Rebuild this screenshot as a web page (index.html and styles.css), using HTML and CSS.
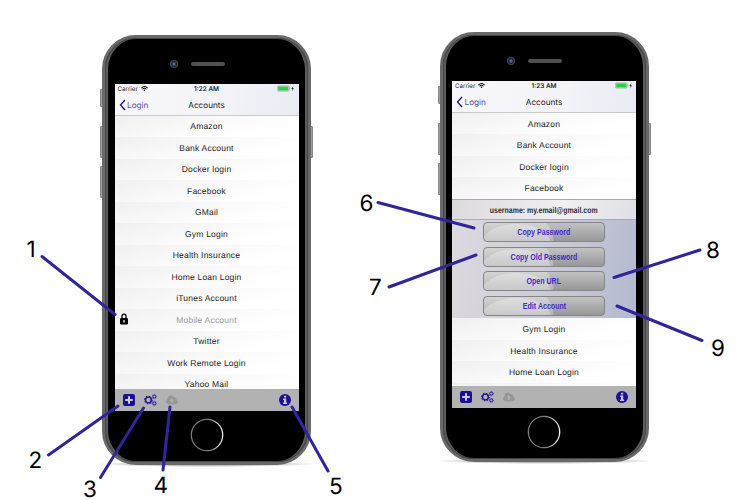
FILE: index.html
```html
<!DOCTYPE html>
<html lang="en">
<head>
<meta charset="utf-8">
<title>Accounts guide</title>
<link rel="stylesheet" href="styles.css">
</head>
<body>
<svg class="defs" width="0" height="0" aria-hidden="true">
  <defs>
    <linearGradient id="ring" x1="0" y1="0" x2="1" y2="0"><stop offset="0" stop-color="#777"/><stop offset=".5" stop-color="#777"/><stop offset="1" stop-color="#eee"/></linearGradient>
    <symbol id="wifi" viewBox="0 0 14 10"><path d="M0 3.3a10.3 10.3 0 0 1 14 0L12.6 4.8a8.2 8.2 0 0 0-11.2 0zM2.4 5.8a6.6 6.6 0 0 1 9.2 0L10.2 7.1a4.6 4.6 0 0 0-6.4 0zM4.7 8.1a3.2 3.2 0 0 1 4.6 0L7 10z"/></symbol>
    <symbol id="battery" viewBox="0 0 18 8"><rect x=".4" y=".8" width="11.8" height="5.4" rx="1" fill="#ddd" stroke="#999" stroke-width=".5"/><rect x="1.2" y="1.5" width="10.1" height="4" fill="#22d63d"/><path d="M12.8 2.6v1.8" stroke="#888" stroke-width=".7"/><path d="M16.500 1l-2.200 2.900h1.300L14.900 6.500 17 3.300h-1.300z" fill="#222"/></symbol>
    <symbol id="plus" viewBox="0 0 12 12"><rect width="12" height="12" rx="2.100"/><path d="M6 2.200v7.600M2.200 6h7.600" stroke="#cacad0" stroke-width="2"/></symbol>
    <symbol id="gears" viewBox="0 0 13 12"><g fill="none" stroke="currentColor"><circle cx="4.400" cy="6" r="2.900" stroke-width="1.400"/><circle cx="4.400" cy="6" r="3.800" stroke-width="1.100" stroke-dasharray="1.500 1.484"/><circle cx="10.300" cy="2.600" r="1.500" stroke-width=".9"/><circle cx="10.300" cy="2.600" r="2.100" stroke-width=".6" stroke-dasharray=".8 .85"/><circle cx="10.300" cy="9.400" r="1.500" stroke-width=".9"/><circle cx="10.300" cy="9.400" r="2.100" stroke-width=".6" stroke-dasharray=".8 .85"/></g></symbol>
    <symbol id="cloud" viewBox="0 0 12 10"><path fill-rule="evenodd" d="M2.700 9.300A2.700 2.700 0 0 1 1.500 4.200 3.400 3.400 0 0 1 7.900 2.300 2 2 0 0 1 10.300 4.800 2.300 2.300 0 0 1 9.600 9.300zM5.800 3.400L3.400 5.800H5v2h1.600v-2h1.600z"/></symbol>
    <symbol id="info" viewBox="0 0 12 12"><circle cx="6" cy="6" r="6"/><path d="M5 1.700h2.200v1.900H5zM4.100 4.600h3.100v3.900h.9v1.400h-4V8.500H5V6h-.9z" fill="#cacad0"/></symbol>
    <symbol id="lock" viewBox="0 0 8 12"><path d="M2 5.500V3.200a2 2 0 0 1 4 0v2.300" fill="none" stroke="#000" stroke-width="1.300"/><rect y="5" width="8" height="6.500" rx="1.200"/><path d="M4 7v2.600" stroke="#fff" stroke-width="1.300"/></symbol>
    <symbol id="back" viewBox="0 0 7 12"><path d="M6 1L1.500 6 6 11" fill="none" stroke="#1a1096" stroke-width="1.300"/></symbol>
  </defs>
</svg>
<main class="stage">
  <section class="phone">
    <i class="key mute"></i><i class="key up"></i><i class="key down"></i><i class="key power"></i>
    <div class="body">
      <div class="top"><i class="camera"></i><i class="speaker"></i></div>
      <div class="screen">
        <header class="head">
          <div class="status"><span class="carrier">Carrier <svg><use href="#wifi"/></svg></span><b>1:22 AM</b><svg class="battery"><use href="#battery"/></svg></div>
          <div class="nav"><span class="login"><svg><use href="#back"/></svg>Login</span><span>Accounts</span></div>
        </header>
        <ul class="list">
          <li>Amazon</li><li>Bank Account</li><li>Docker login</li><li>Facebook</li><li>GMail</li><li>Gym Login</li><li>Health Insurance</li><li>Home Loan Login</li><li>iTunes Account</li>
          <li class="locked"><svg><use href="#lock"/></svg>Mobile Account</li>
          <li>Twitter</li><li>Work Remote Login</li><li>Yahoo Mail</li>
        </ul>
        <footer class="bar"><svg class="plus"><use href="#plus"/></svg><svg class="gears"><use href="#gears"/></svg><svg class="cloud"><use href="#cloud"/></svg><svg class="info"><use href="#info"/></svg></footer>
      </div>
      <svg class="home" viewBox="0 0 34 34"><circle cx="17" cy="17" r="15.700" fill="none" stroke="url(#ring)" stroke-width="1.300"/></svg>
    </div>
  </section>
  <section class="phone second">
    <i class="key mute"></i><i class="key up"></i><i class="key down"></i><i class="key power"></i>
    <div class="body">
      <div class="top"><i class="camera"></i><i class="speaker"></i></div>
      <div class="screen">
        <header class="head">
          <div class="status"><span class="carrier">Carrier <svg><use href="#wifi"/></svg></span><b>1:23 AM</b><svg class="battery"><use href="#battery"/></svg></div>
          <div class="nav"><span class="login"><svg><use href="#back"/></svg>Login</span><span>Accounts</span></div>
        </header>
        <div class="list">
          <ul><li>Amazon</li><li>Bank Account</li><li>Docker login</li><li>Facebook</li></ul>
          <div class="user"><span>username: my.email@gmail.com</span></div>
          <div class="actions">
            <button><span>Copy Password</span></button><button><span>Copy Old Password</span></button><button><span>Open URL</span></button><button><span>Edit Account</span></button>
          </div>
          <ul><li>Gym Login</li><li>Health Insurance</li><li>Home Loan Login</li><li></li></ul>
        </div>
        <footer class="bar"><svg class="plus"><use href="#plus"/></svg><svg class="gears"><use href="#gears"/></svg><svg class="cloud"><use href="#cloud"/></svg><svg class="info"><use href="#info"/></svg></footer>
      </div>
      <svg class="home" viewBox="0 0 34 34"><circle cx="17" cy="17" r="15.700" fill="none" stroke="url(#ring)" stroke-width="1.300"/></svg>
    </div>
  </section>
  <svg class="callouts" viewBox="0 0 750 500">
    <path d="M42 256.500L115 314.500M48.500 455L118 406M100.500 477.500L143.500 408M163 470L170 407M292 407L328 471M378 202.500L474 228M389 287L476 255M700 250L614 277.500M702 340.500L617 306"/>
    <g><text x="26.500" y="257">1</text><text x="28.500" y="467.500">2</text><text x="83" y="497">3</text><text x="153.500" y="493">4</text><text x="329" y="494">5</text><text x="359.500" y="211">6</text><text x="369" y="294.500">7</text><text x="706" y="258">8</text><text x="711" y="355.500">9</text></g>
  </svg>
</main>
</body>
</html>
```
FILE: styles.css
```css
* { box-sizing: border-box; }
body { margin: 0; background: #fff; font-family: "Liberation Sans", Arial, sans-serif; text-rendering: geometricPrecision; }
.defs { position: absolute; }
.stage { position: relative; width: 750px; height: 500px; overflow: hidden; display: flex; align-items: flex-start; gap: 128.500px; padding: 35px 0 0 102px; }
.phone { position: relative; width: 209px; height: 430px; flex: none; }
.phone::before { content: ""; position: absolute; left: -6px; right: -6px; bottom: -2px; height: 6px; border-radius: 50%; background: radial-gradient(ellipse, #999 20%, transparent 70%); }
.second { margin-top: -2.700px; }
.body { position: relative; height: 430px; border-radius: 34px; background: #000; border: 3px solid #696969; box-shadow: inset 0 0 0 1px #444, inset 3px 0 0 #5c5c5c, inset -3px 0 0 #5c5c5c; padding: 0 9.500px; overflow: hidden; }
.key { position: absolute; left: -2px; width: 4px; background: #a0a0a0; border: 1px solid #858585; border-radius: 1px; }
.mute { top: 54px; height: 18px; }
.up { top: 91px; height: 32px; }
.down { top: 131px; height: 32px; }
.power { top: 91px; left: auto; right: -2px; height: 32px; }
.top { height: 45.500px; display: flex; padding: 22px 0 0 55px; gap: 13px; }
.camera { width: 8px; height: 8px; border-radius: 50%; background: radial-gradient(circle, #416ca8 0 15%, #182034 40%, #444 65%); }
.speaker { width: 34px; height: 4px; margin-top: 2px; border-radius: 2px; background: #505050; }
.screen { width: 184px; height: 327.500px; display: flex; flex-direction: column; background: #fff; overflow: hidden; }
.head { height: 32px; flex: none; background: linear-gradient(100deg, #f8f8fa, #f3f3f8 60%, #e9ecf4); border-bottom: 1px solid #c9cace; color: #222; font-family: Inter, "Liberation Sans", sans-serif; }
.status { height: 11px; display: grid; grid-template-columns: 1fr 1fr 1fr; align-items: center; padding: 1px 3px; font-size: 6.200px; }
.status b { text-align: center; font-weight: 500; font-size: 6.500px; color: #000; }
.carrier svg { width: 7px; height: 5px; margin-left: 1px; }
.battery { width: 18px; height: 8px; justify-self: end; }
.nav { height: 20px; position: relative; display: flex; align-items: center; justify-content: center; font-size: 8.200px; }
.login { position: absolute; left: 4px; display: flex; align-items: center; gap: 1.500px; color: #584bae; }
.login svg { width: 7px; height: 12px; }
ul { margin: 0; padding: 0; list-style: none; }
.list { height: 273.500px; flex: none; overflow: hidden; }
li { position: relative; height: 21.500px; display: flex; align-items: center; justify-content: center; font-size: 8.500px; letter-spacing: .2px; color: #1c1c1c; background: linear-gradient(165deg, #f0f0f1 0, #fafafa 45%, #fff 80%); }
.locked { color: #999; }
.locked svg { position: absolute; left: 5px; top: 4px; width: 8px; height: 12px; }
.bar { height: 22px; flex: none; display: flex; align-items: center; padding: 0 8px; background: #b2b2b2; color: #1b0f96; fill: #1b0f96; }
.plus, .info { width: 12px; height: 12px; }
.gears { width: 13px; height: 12px; margin-left: 9px; }
.cloud { width: 12px; height: 10px; margin-left: 9px; fill: #979797; }
.info { margin-left: auto; }
.home { display: block; width: 34px; height: 34px; margin: 7px auto 0; }
.user { height: 21.500px; display: flex; align-items: center; justify-content: center; border-top: 1px solid #a9a9ad; border-bottom: 1px solid #a9aab5; background: linear-gradient(100deg, #dcdadd, #f1eff2 60%, #dfe0e6); font-weight: 700; font-size: 8.500px; color: #303038; }
.user span { transform: scaleX(.82); white-space: nowrap; }
.actions { height: 98px; display: flex; flex-direction: column; align-items: center; gap: 4.500px; padding-top: 2px; background: linear-gradient(100deg, #dcdade, #cfced8 45%, #b4b9cf); }
button { width: 122px; height: 20px; flex: none; padding: 0; border: 1.500px solid #858585; border-radius: 4px; background: radial-gradient(ellipse 34px 17px at 27% 100%, #ffffff48 97%, transparent 100%), radial-gradient(ellipse 70px 42px at 0 100%, #ffffff48 98%, transparent 100%), linear-gradient(#c2c2c2, #a9a9a9 60%, #979797); font: 700 9.300px "Liberation Sans", sans-serif; color: #4029d0; }
button span { display: inline-block; transform: scaleX(.76); white-space: nowrap; }
.callouts { position: absolute; left: 0; top: 0; width: 750px; height: 500px; }
.callouts path { fill: none; stroke: #30249f; stroke-width: 3; stroke-linecap: round; }
.callouts text { font-family: Inter, "Liberation Sans", sans-serif; font-size: 22.500px; fill: #000; }
```
